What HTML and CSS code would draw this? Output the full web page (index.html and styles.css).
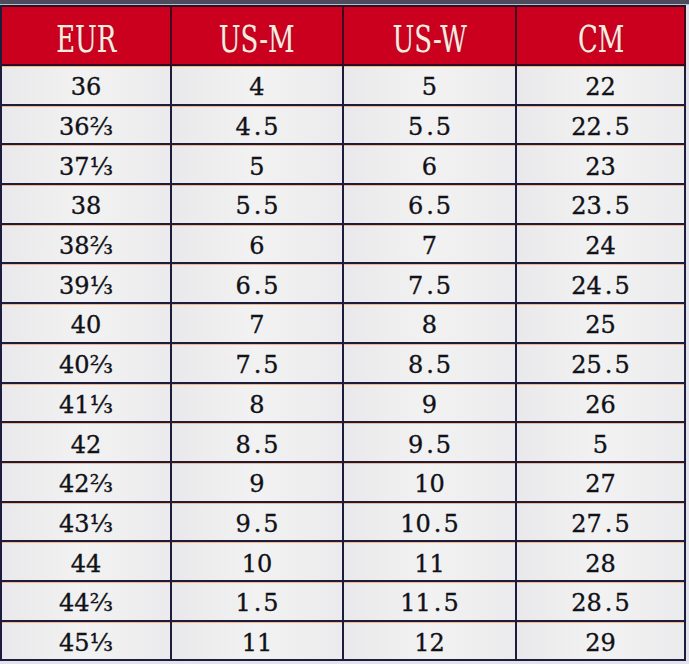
FILE: index.html
```html
<!DOCTYPE html>
<html>
<head>
<meta charset="utf-8">
<link rel="stylesheet" href="styles.css">
</head>
<body>
<div class="frame">
  <div class="topbar"></div>
  <div class="chart">
    <div class="hd"><span class="hl">EUR</span></div>
    <div class="hd"><span class="hl">US-M</span></div>
    <div class="hd"><span class="hl">US-W</span></div>
    <div class="hd"><span class="hl">CM</span></div>

    <div class="c">36</div><div class="c">4</div><div class="c">5</div><div class="c">22</div>
    <div class="c">36⅔</div><div class="c">4<span class="pt">.</span>5</div><div class="c">5<span class="pt">.</span>5</div><div class="c">22<span class="pt">.</span>5</div>
    <div class="c">37⅓</div><div class="c">5</div><div class="c">6</div><div class="c">23</div>
    <div class="c">38</div><div class="c">5<span class="pt">.</span>5</div><div class="c">6<span class="pt">.</span>5</div><div class="c">23<span class="pt">.</span>5</div>
    <div class="c">38⅔</div><div class="c">6</div><div class="c">7</div><div class="c">24</div>
    <div class="c">39⅓</div><div class="c">6<span class="pt">.</span>5</div><div class="c">7<span class="pt">.</span>5</div><div class="c">24<span class="pt">.</span>5</div>
    <div class="c">40</div><div class="c">7</div><div class="c">8</div><div class="c">25</div>
    <div class="c">40⅔</div><div class="c">7<span class="pt">.</span>5</div><div class="c">8<span class="pt">.</span>5</div><div class="c">25<span class="pt">.</span>5</div>
    <div class="c">41⅓</div><div class="c">8</div><div class="c">9</div><div class="c">26</div>
    <div class="c">42</div><div class="c">8<span class="pt">.</span>5</div><div class="c">9<span class="pt">.</span>5</div><div class="c">5</div>
    <div class="c">42⅔</div><div class="c">9</div><div class="c">10</div><div class="c">27</div>
    <div class="c">43⅓</div><div class="c">9<span class="pt">.</span>5</div><div class="c">10<span class="pt">.</span>5</div><div class="c">27<span class="pt">.</span>5</div>
    <div class="c">44</div><div class="c">10</div><div class="c">11</div><div class="c">28</div>
    <div class="c">44⅔</div><div class="c">1<span class="pt">.</span>5</div><div class="c">11<span class="pt">.</span>5</div><div class="c">28<span class="pt">.</span>5</div>
    <div class="c">45⅓</div><div class="c">11</div><div class="c">12</div><div class="c">29</div>
  </div>
</div>
</body>
</html>
```

FILE: styles.css
```css
html, body {
  margin: 0;
  padding: 0;
  background: #e2e3ea;
}

.frame {
  width: 689px;
  height: 664px;
  overflow: hidden;
  background: #e2e3ea;
}

.topbar {
  height: 4px;
  background: #4e4c5c;
  border-bottom: 1px solid #9cc8dc;
}

.chart {
  display: grid;
  grid-template-columns: 170px 172px 173px 169px;
  grid-template-rows: 61px repeat(15, 39.7px);
  width: 684px;
  border-left: 2px solid #1e1c3c;
  font-family: "DejaVu Serif", serif;
}

.hd {
  box-sizing: border-box;
  background: #ca001e;
  border-top: 2px solid #3c0a1a;
  border-right: 2px solid #3c0a1a;
  border-bottom: 2px solid #2a0a20;
  display: flex;
  align-items: center;
  justify-content: center;
  padding-top: 6px;
}

.hl {
  display: inline-block;
  font-size: 38px;
  line-height: 1;
  color: #f6ecd8;
  transform: scaleX(0.68);
  text-shadow: 1px 0 0 rgba(120, 90, 200, 0.5);
}

.c {
  box-sizing: border-box;
  background: linear-gradient(90deg, #e9e9eb 0%, #f2f2f2 50%, #ebebed 100%);
  border-right: 2px solid #1e1c3c;
  border-bottom: 2px solid #1e1c3c;
  box-shadow: inset 0 1px 0 #f2b68a;
  display: flex;
  align-items: center;
  justify-content: center;
  font-size: 24px;
  color: #111118;
  -webkit-text-stroke: 0.35px #111118;
  padding-top: 5px;
}

.pt {
  padding: 0 2px 0 3px;
}
```
